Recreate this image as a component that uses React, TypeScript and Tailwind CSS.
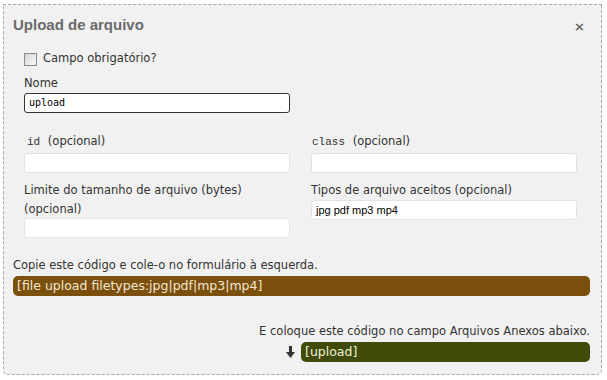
import { useState } from "react";

const BODY = "font-['DejaVu_Sans',Verdana,sans-serif]";

function Field({ className = "", value = "" }: { className?: string; value?: string }) {
  return (
    <div
      className={`h-[20px] w-[266px] rounded-[3px] border border-[#e2e2e2] bg-white px-[4px] text-[11px] leading-[18px] text-black font-['Liberation_Sans',Arial,sans-serif] ${className}`}
    >
      {value}
    </div>
  );
}

export default function App() {
  const [required, setRequired] = useState(false);

  return (
    <div className="h-[380px] w-[607px] bg-white pl-[3px] pt-[4px]">
      <div
        className={`h-[371px] w-[599px] rounded-b-[5px] border border-dashed border-[#a8a8a8] bg-[#f1f1f1] text-[11.5px] text-[#333] ${BODY}`}
      >
        {/* header */}
        <div className="flex h-[43px] items-start justify-between pl-[9px] pr-[16px] pt-[10px]">
          <h2 className="font-['Liberation_Sans',Arial,sans-serif] text-[15px] font-bold leading-[20px] text-[#6b6b6b]">
            Upload de arquivo
          </h2>
          <button className="mt-[5px] text-[13px] font-bold leading-[14px] text-[#666]">×</button>
        </div>

        <div className="pl-[20px]">
          <label className="mt-[2px] flex h-[18px] items-center gap-[6px]">
            <input
              type="checkbox"
              checked={required}
              onChange={(e) => setRequired(e.target.checked)}
              className="h-[13px] w-[13px] appearance-none border border-[#8a8a8a] bg-gradient-to-br from-[#d8d8d8] to-[#f8f8f8]"
            />
            <span className="text-[11.5px]">Campo obrigatório?</span>
          </label>

          <div className="mt-[6px] leading-[18px]">Nome</div>
          <div className="mt-[1px] h-[20px] w-[266px] rounded-[3px] border border-[#333] bg-white px-[4px] font-['DejaVu_Sans_Mono',monospace] text-[10px] leading-[18px] text-black">
            upload
          </div>

          <div className="mt-[18px] grid grid-cols-[266px_266px] gap-x-[21px]">
            <div>
              <div className="pl-[3px] leading-[20px]">
                <span className="mr-[4px] font-['Liberation_Mono',monospace] text-[11px]">id</span> (opcional)
              </div>
              <Field className="mt-[1px]" />
            </div>
            <div>
              <div className="pl-[1px] leading-[20px]">
                <span className="mr-[4px] font-['Liberation_Mono',monospace] text-[11px]">class</span> (opcional)
              </div>
              <Field className="mt-[1px]" />
            </div>

            <div className="mt-[8px]">
              <div className="leading-[19px]">
                Limite do tamanho de arquivo (bytes)
                <br />
                (opcional)
              </div>
              <Field className="mt-[-1px]" value="" />
            </div>
            <div className="mt-[8px]">
              <div className="leading-[19px]">Tipos de arquivo aceitos (opcional)</div>
              <Field value="jpg pdf mp3 mp4" />
            </div>
          </div>
        </div>

        {/* generated tags */}
        <div className="mt-[18px] px-[9px]">
          <div className="leading-[18px]">Copie este código e cole-o no formulário à esquerda.</div>
          <div className="mt-[2px] h-[20px] w-[577px] rounded-[5px] bg-[#7b4f0c] px-[4px] text-[12.5px] leading-[20px] text-[#f3e7d3]">
            [file upload filetypes:jpg|pdf|mp3|mp4]
          </div>

          <div className="mt-[26px] pr-[2px] text-right leading-[18px]">
            E coloque este código no campo Arquivos Anexos abaixo.
          </div>
          <div className="mt-[2px] flex items-center justify-end gap-[6px] pr-[2px]">
            <svg width="9" height="12" viewBox="0 0 9 12" className="text-[#333]">
              <path d="M3 0h3v6h3L4.5 12 0 6h3z" fill="currentColor" />
            </svg>
            <div className="h-[20px] w-[289px] rounded-[5px] bg-[#404b07] px-[4px] text-[12.5px] leading-[20px] text-[#eef0d8]">
              [upload]
            </div>
          </div>
        </div>
      </div>
    </div>
  );
}
